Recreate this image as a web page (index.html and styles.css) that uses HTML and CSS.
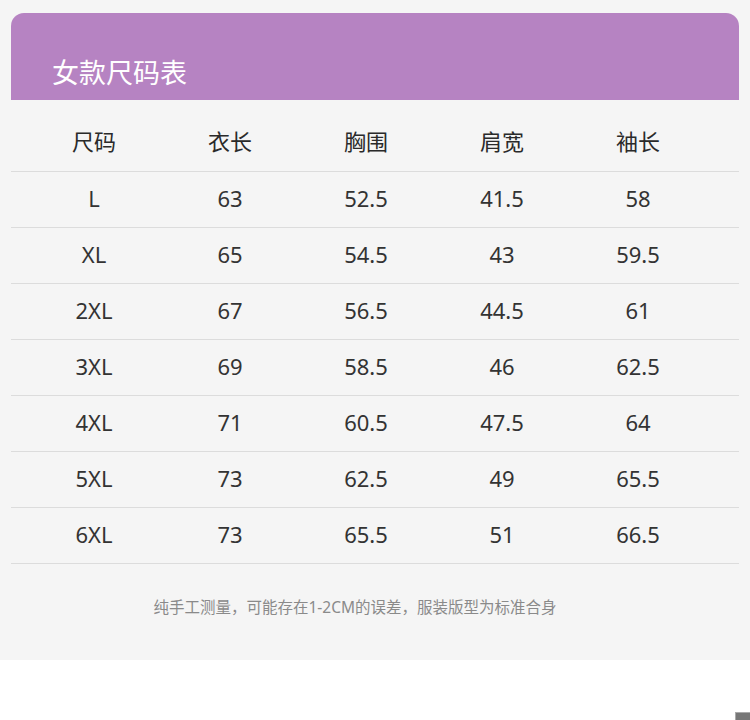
FILE: index.html
```html
<!DOCTYPE html>
<html lang="zh">
<head>
<meta charset="utf-8">
<title>女款尺码表</title>
<link rel="stylesheet" href="styles.css">
</head>
<body>
<div class="page">
  <div class="card">
    <div class="card-head">女款尺码表</div>
    <div class="table">
      <div class="row head"><span>尺码</span><span>衣长</span><span>胸围</span><span>肩宽</span><span>袖长</span></div>
      <div class="row"><span>L</span><span>63</span><span>52.5</span><span>41.5</span><span>58</span></div>
      <div class="row"><span>XL</span><span>65</span><span>54.5</span><span>43</span><span>59.5</span></div>
      <div class="row"><span>2XL</span><span>67</span><span>56.5</span><span>44.5</span><span>61</span></div>
      <div class="row"><span>3XL</span><span>69</span><span>58.5</span><span>46</span><span>62.5</span></div>
      <div class="row"><span>4XL</span><span>71</span><span>60.5</span><span>47.5</span><span>64</span></div>
      <div class="row"><span>5XL</span><span>73</span><span>62.5</span><span>49</span><span>65.5</span></div>
      <div class="row"><span>6XL</span><span>73</span><span>65.5</span><span>51</span><span>66.5</span></div>
    </div>
    <p class="note">纯手工测量，可能存在1-2CM的误差，服装版型为标准合身</p>
  </div>
</div>
<div class="totop"></div>
</body>
</html>
```
FILE: styles.css
```css
html, body {
  margin: 0;
  padding: 0;
  background: #ffffff;
  font-family: "Noto Sans", "Noto Sans CJK SC", sans-serif;
}
.page {
  background: #f5f5f5;
  height: 660px;
  padding: 13px 11px 0;
  box-sizing: border-box;
}
.card-head {
  background: #b683c2;
  border-radius: 13px 13px 0 0;
  height: 87px;
  box-sizing: border-box;
  padding: 42px 0 0 41px;
  color: #ffffff;
  font-size: 27px;
  line-height: 36px;
}
.table {
  display: flex;
  flex-direction: column;
}
.row {
  display: grid;
  grid-template-columns: repeat(5, 136px);
  padding-left: 15px;
  padding-bottom: 4px;
  height: 56px;
  box-sizing: border-box;
  align-items: center;
  border-bottom: 1px solid #dcdcdc;
  color: #333333;
  font-size: 22px;
}
.row span {
  text-align: center;
}
.row.head {
  height: 72px;
  padding-top: 10px;
  padding-bottom: 2px;
  color: #2a2a2a;
}
.note {
  margin: 33px 0 0;
  padding-right: 40px;
  text-align: center;
  font-size: 15.5px;
  color: #8a8a8a;
  line-height: 20px;
}
.totop {
  position: fixed;
  right: 0;
  bottom: 0;
  width: 14px;
  height: 7px;
  background: #777777;
  border-top: 1px solid #aaaaaa;
  border-left: 1px solid #aaaaaa;
}
```
